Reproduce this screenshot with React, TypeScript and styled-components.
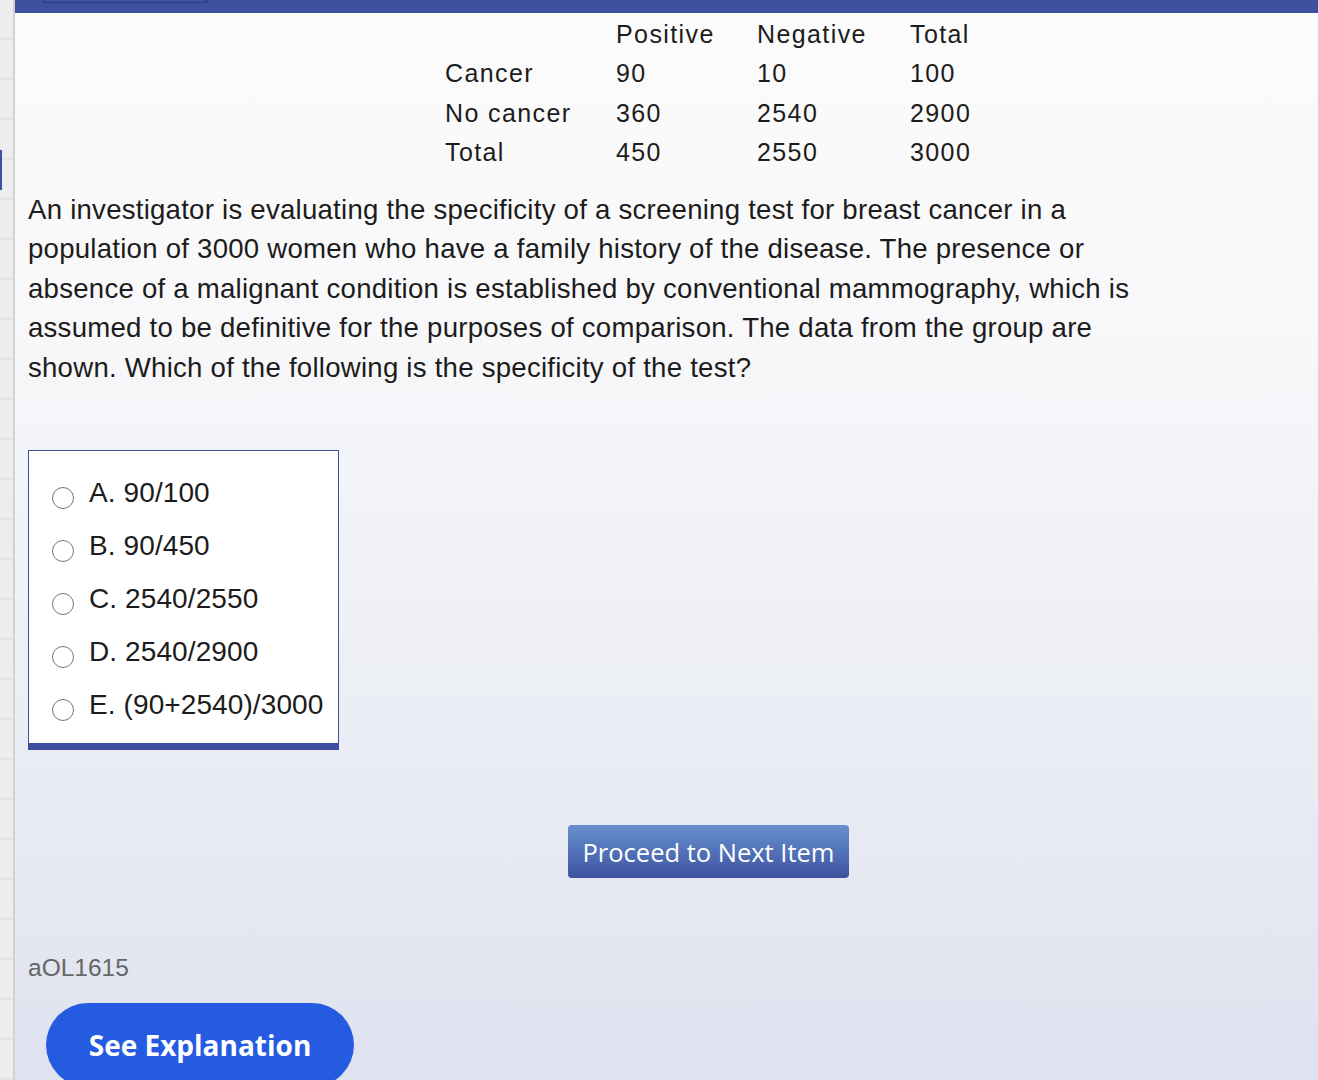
import React from "react";
import styled, { createGlobalStyle } from "styled-components";

const Global = createGlobalStyle`
  html, body { margin: 0; padding: 0; }
  body { width: 1318px; height: 1080px; overflow: hidden; font-family: "Liberation Sans", Arial, sans-serif; }
`;

const Shell = styled.div`
  display: flex;
  width: 1318px;
  height: 1080px;
`;

const Rail = styled.div`
  position: relative;
  width: 13px;
  flex: none;
  background: repeating-linear-gradient(
    to bottom,
    #ededed 0px,
    #ededed 38px,
    #e4e4e4 38px,
    #e4e4e4 40px
  );
  border-right: 2px solid #d2d2d2;
`;

const RailMarker = styled.div`
  position: absolute;
  left: 0;
  top: 150px;
  width: 2px;
  height: 40px;
  background: #3d4f9e;
`;

const Main = styled.div`
  flex: 1;
  display: flex;
  flex-direction: column;
  background: linear-gradient(to bottom, #fbfbfb 0%, #f8f8fa 30%, #eceef5 65%, #dfe2ef 100%);
  overflow: hidden;
`;

const TopBar = styled.div`
  height: 13px;
  flex: none;
  background: #3d4f9e;
  padding-left: 28px;
`;

const TopTab = styled.div`
  width: 163px;
  height: 2px;
  border: 1px solid #2a3a7a;
  border-top: none;
  border-radius: 0 0 4px 4px;
`;

const Table = styled.div`
  display: grid;
  grid-template-columns: 171px 141px 153px auto;
  margin: 2px 0 0 430px;
  font-size: 25px;
  line-height: 39.4px;
  letter-spacing: 1.4px;
  color: #1c1c1c;
`;

const Cell = styled.div``;

const Question = styled.p`
  margin: 17px 0 0 13px;
  width: 1240px;
  font-size: 27.6px;
  letter-spacing: 0.24px;
  line-height: 39.5px;
  color: #1c1c1c;
`;

const AnswerBox = styled.div`
  margin: 63px 0 0 13px;
  width: 311px;
  background: #fff;
  border: 1px solid #3d4f9e;
  border-bottom: 7px solid #3d4f9e;
  padding: 15px 0 12px 23px;
  box-sizing: border-box;
`;

const Option = styled.label`
  display: flex;
  align-items: center;
  height: 53px;
  gap: 15px;
  font-size: 28px;
  letter-spacing: 0.1px;
  color: #1c1c1c;
`;

const Radio = styled.span`
  width: 22px;
  height: 22px;
  box-sizing: border-box;
  border: 1.5px solid #767676;
  border-radius: 50%;
  background: #fff;
  flex: none;
  margin-top: 10px;
`;

const ProceedButton = styled.button`
  margin: 75px 0 0 553px;
  width: 281px;
  height: 53px;
  flex: none;
  border: none;
  border-radius: 4px;
  background: linear-gradient(to bottom, #6790cc 0%, #5272b8 50%, #3f51a0 100%);
  color: #fff;
  font-family: "Open Sans", sans-serif;
  font-size: 25.5px;
  padding: 0;
  align-self: flex-start;
`;

const ItemId = styled.div`
  margin: 76px 0 0 13px;
  font-size: 24.5px;
  line-height: 28px;
  color: #666;
`;

const ExplainButton = styled.button`
  margin: 21px 0 0 31px;
  width: 308px;
  height: 84px;
  flex: none;
  border: none;
  border-radius: 42px;
  background: #255be0;
  color: #fff;
  font-family: "Open Sans", sans-serif;
  font-weight: 700;
  font-size: 28px;
  padding: 0;
  align-self: flex-start;
`;

const rows = [
  ["", "Positive", "Negative", "Total"],
  ["Cancer", "90", "10", "100"],
  ["No cancer", "360", "2540", "2900"],
  ["Total", "450", "2550", "3000"],
];

const lines = [
  "An investigator is evaluating the specificity of a screening test for breast cancer in a",
  "population of 3000 women who have a family history of the disease. The presence or",
  "absence of a malignant condition is established by conventional mammography, which is",
  "assumed to be definitive for the purposes of comparison. The data from the group are",
  "shown. Which of the following is the specificity of the test?",
];

const options = [
  "A. 90/100",
  "B. 90/450",
  "C. 2540/2550",
  "D. 2540/2900",
  "E. (90+2540)/3000",
];

export default function App() {
  return (
    <>
      <Global />
      <Shell>
        <Rail>
          <RailMarker />
        </Rail>
        <Main>
          <TopBar>
            <TopTab />
          </TopBar>
          <Table>
            {rows.flatMap((r, i) => r.map((c, j) => <Cell key={`${i}-${j}`}>{c}</Cell>))}
          </Table>
          <Question>
            {lines.map((l, i) => (
              <React.Fragment key={i}>
                {l}
                {i < lines.length - 1 && <br />}
              </React.Fragment>
            ))}
          </Question>
          <AnswerBox>
            {options.map((o) => (
              <Option key={o}>
                <Radio />
                {o}
              </Option>
            ))}
          </AnswerBox>
          <ProceedButton>Proceed to Next Item</ProceedButton>
          <ItemId>aOL1615</ItemId>
          <ExplainButton>See Explanation</ExplainButton>
        </Main>
      </Shell>
    </>
  );
}
